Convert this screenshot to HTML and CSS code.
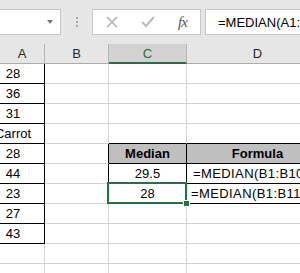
FILE: index.html
```html
<!DOCTYPE html>
<html>

<head>
    <title>Median</title>
    <link rel="stylesheet" href="styles.css">
</head>

<body>
    <div class="toolbar">
        <div class="name-box">
            <span class="drop"></span>
        </div>
        <div class="grip"><i></i><i></i><i></i></div>
        <div class="btn-box">
            <svg class="icon" width="12" height="12" viewBox="0 0 12 12">
                <path d="M1 1 L11 11 M11 1 L1 11" stroke="#b4b4b4" stroke-width="1.6" fill="none" />
            </svg>
            <svg class="icon" width="14" height="12" viewBox="0 0 14 12">
                <path d="M1 6 L5 10 L13 1" stroke="#bcbcbc" stroke-width="2" fill="none" />
            </svg>
            <span class="fx">fx</span>
        </div>
        <div class="formula-box">=MEDIAN(A1:B11)</div>
    </div>

    <div class="sheet">
        <div class="cell hd">A</div>
        <div class="cell hd">B</div>
        <div class="cell hd sel">C</div>
        <div class="cell hd">D</div>

        <div class="cell col-a">28</div>
        <div class="cell"></div>
        <div class="cell"></div>
        <div class="cell"></div>

        <div class="cell col-a">36</div>
        <div class="cell"></div>
        <div class="cell"></div>
        <div class="cell"></div>

        <div class="cell col-a">31</div>
        <div class="cell"></div>
        <div class="cell"></div>
        <div class="cell"></div>

        <div class="cell col-a">Carrot</div>
        <div class="cell"></div>
        <div class="cell above"></div>
        <div class="cell above"></div>

        <div class="cell col-a">28</div>
        <div class="cell before"></div>
        <div class="cell tbl th">Median</div>
        <div class="cell tbl th">Formula</div>

        <div class="cell col-a">44</div>
        <div class="cell before"></div>
        <div class="cell tbl center">29.5</div>
        <div class="cell tbl f1">=MEDIAN(B1:B10)</div>

        <div class="cell col-a">23</div>
        <div class="cell before"></div>
        <div class="cell tbl center active">28</div>
        <div class="cell tbl f2">=MEDIAN(B1:B11,"Carrot")</div>

        <div class="cell col-a">27</div>
        <div class="cell"></div>
        <div class="cell"></div>
        <div class="cell"></div>

        <div class="cell col-a">43</div>
        <div class="cell"></div>
        <div class="cell"></div>
        <div class="cell"></div>

        <div class="cell"></div>
        <div class="cell"></div>
        <div class="cell"></div>
        <div class="cell"></div>

        <div class="cell"></div>
        <div class="cell"></div>
        <div class="cell"></div>
        <div class="cell"></div>
    </div>
</body>

</html>
```

FILE: styles.css
```css
body {
    margin: 0;
    width: 300px;
    height: 273px;
    overflow: hidden;
    background: #fff;
    font-family: 'Liberation Sans', Arial, sans-serif;
    font-size: 13px;
    color: #000;
}

.toolbar {
    display: flex;
    align-items: flex-start;
    height: 44px;
    padding-top: 9px;
    box-sizing: border-box;
    background: #e6e6e6;
}

.name-box {
    position: relative;
    width: 61px;
    height: 26px;
    box-sizing: border-box;
    background: #fff;
    border: 1px solid #c6c6c6;
    border-left: none;
}

.drop {
    position: absolute;
    right: 7px;
    top: 10px;
    border-left: 3.5px solid transparent;
    border-right: 3.5px solid transparent;
    border-top: 4px solid #7a7a7a;
}

.grip {
    display: flex;
    flex-direction: column;
    gap: 2px;
    margin: 8px 14px 0 15px;
}

.grip i {
    display: block;
    width: 2px;
    height: 2px;
    background: #a6a6a6;
}

.btn-box {
    display: flex;
    align-items: center;
    width: 109px;
    height: 26px;
    box-sizing: border-box;
    background: #fff;
    border: 1px solid #c6c6c6;
}

.btn-box .icon:first-child {
    margin-left: 13px;
}

.btn-box .icon:nth-child(2) {
    margin-left: 23px;
}

.fx {
    margin-left: 23px;
    font-family: 'Liberation Serif', serif;
    font-style: italic;
    font-size: 15px;
    color: #555;
    letter-spacing: -1px;
}

.formula-box {
    flex: 1;
    margin-left: 4px;
    height: 26px;
    box-sizing: border-box;
    padding: 5px 0 0 12px;
    background: #fff;
    border: 1px solid #c6c6c6;
    border-right: none;
    white-space: nowrap;
    overflow: hidden;
}

.sheet {
    display: grid;
    grid-template-columns: 45px 64px 78px 142px;
    grid-auto-rows: 20px;
}

.cell {
    display: flex;
    align-items: center;
    box-sizing: border-box;
    border-right: 1px solid #d4d4d4;
    border-bottom: 1px solid #d4d4d4;
    white-space: nowrap;
    overflow: hidden;
}

.hd {
    justify-content: center;
    background: #e6e6e6;
    color: #262626;
    border-right-color: #b5b5b5;
    border-bottom-color: #ababab;
}

.hd.sel {
    background: #d2d2d2;
    color: #1e6b45;
    border-bottom: 2px solid #217346;
}

.col-a {
    justify-content: center;
    padding-right: 18px;
    border-right-color: #000;
    border-bottom-color: #000;
}

.above {
    border-bottom-color: #000;
}

.before {
    border-right-color: #000;
}

.tbl {
    border-right-color: #000;
    border-bottom-color: #000;
}

.th {
    justify-content: center;
    font-weight: bold;
    background: #bfbfbf;
}

.center {
    justify-content: center;
}

.f1 {
    padding-left: 6px;
    letter-spacing: 0.4px;
}

.f2 {
    padding-left: 4px;
    letter-spacing: 0.4px;
}

.active {
    position: relative;
    overflow: visible;
}

.active::after {
    content: '';
    position: absolute;
    left: -2px;
    top: -2px;
    right: -1px;
    bottom: -1px;
    border: 2px solid #217346;
}

.active::before {
    content: '';
    position: absolute;
    right: -4px;
    bottom: -4px;
    width: 5px;
    height: 5px;
    background: #217346;
    border: 1px solid #fff;
    z-index: 1;
}
```
